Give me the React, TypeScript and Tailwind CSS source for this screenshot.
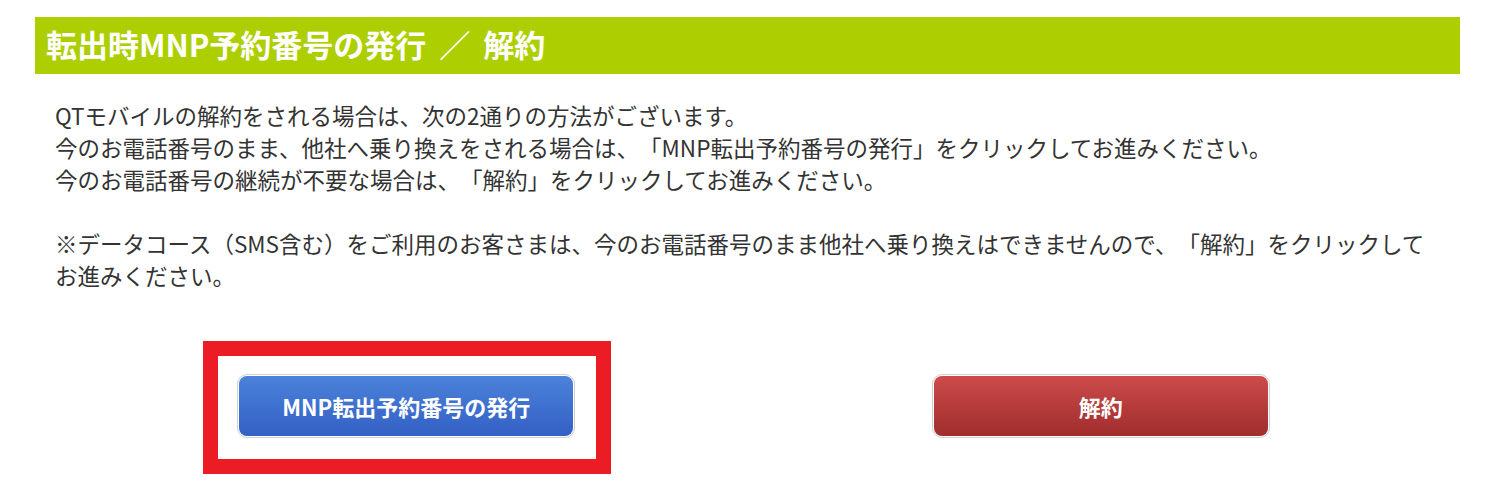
const font = { fontFamily: '"Noto Sans CJK JP", "Noto Sans", sans-serif' };

function ActionButton({
  label,
  tone,
}: {
  label: string;
  tone: "blue" | "red";
}) {
  const fill =
    tone === "blue"
      ? "bg-linear-to-b from-[#4b82da] to-[#3360c5]"
      : "bg-linear-to-b from-[#cd4b4b] to-[#a02d2d]";
  return (
    <div className="w-[338px] h-[64px] rounded-[10px] border border-[#cfcfcf] bg-white p-[1px]">
      <div
        className={`h-full w-full rounded-[8px] ${fill} flex items-center justify-center text-white font-bold text-[22px]`}
      >
        {label}
      </div>
    </div>
  );
}

export default function App() {
  return (
    <div className="min-h-screen w-full bg-white [text-spacing-trim:space-all]" style={font}>
      <div className="ml-[35px] w-[1425px] pt-[17px]">
        <h2 className="flex h-[57px] items-center bg-[#adcf02] pl-[11px] pb-[3px] text-[31px] font-bold text-white whitespace-nowrap">
          転出時MNP予約番号の発行
          <span className="mx-[13px]">／</span>
          解約
        </h2>

        <div className="pl-[20px] pt-[25px] text-[22.5px] leading-[32px] text-[#333333] whitespace-nowrap">
          <p>QTモバイルの解約をされる場合は、次の2通りの方法がございます。</p>
          <p>今のお電話番号のまま、他社へ乗り換えをされる場合は、「MNP転出予約番号の発行」をクリックしてお進みください。</p>
          <p>今のお電話番号の継続が不要な場合は、「解約」をクリックしてお進みください。</p>
          <p className="mt-[32px]">
            ※データコース（SMS含む）をご利用のお客さまは、今のお電話番号のまま他社へ乗り換えはできませんので、「解約」をクリックして
          </p>
          <p>お進みください。</p>
        </div>

        <div className="mt-[50px] grid grid-cols-2 pl-[26px] pr-[14px]">
          <div className="flex justify-center">
            <div className="border-[15px] border-[#ec1c24] pt-[18px] pb-[21px] pl-[19px] pr-[21px]">
              <ActionButton label="MNP転出予約番号の発行" tone="blue" />
            </div>
          </div>
          <div className="flex justify-center">
            <div className="border-[15px] border-transparent pt-[18px] pb-[21px] pl-[21px] pr-[19px]">
              <ActionButton label="解約" tone="red" />
            </div>
          </div>
        </div>
      </div>
    </div>
  );
}
